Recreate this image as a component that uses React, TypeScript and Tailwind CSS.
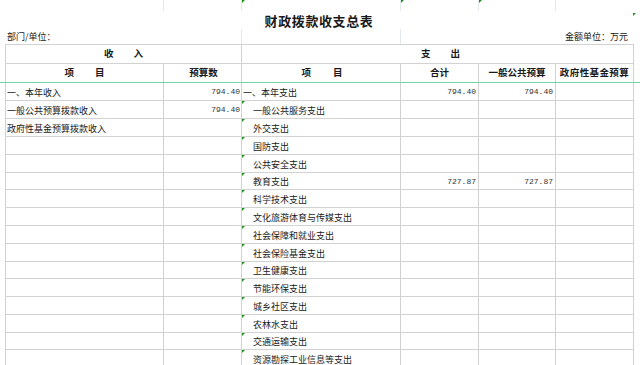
import React from "react";

type Row = {
  l?: string;
  lv?: string;
  r: string;
  ind?: boolean;
  a?: string;
  b?: string;
  short?: boolean;
};

const rows: Row[] = [
  { l: "一、本年收入", lv: "794.40", r: "一、本年支出", a: "794.40", b: "794.40" },
  { l: "一般公共预算拨款收入", lv: "794.40", r: "一般公共服务支出", ind: true },
  { l: "政府性基金预算拨款收入", r: "外交支出", ind: true },
  { r: "国防支出", ind: true },
  { r: "公共安全支出", ind: true },
  { r: "教育支出", ind: true, a: "727.87", b: "727.87", short: true },
  { r: "科学技术支出", ind: true },
  { r: "文化旅游体育与传媒支出", ind: true },
  { r: "社会保障和就业支出", ind: true },
  { r: "社会保险基金支出", ind: true },
  { r: "卫生健康支出", ind: true, short: true },
  { r: "节能环保支出", ind: true },
  { r: "城乡社区支出", ind: true },
  { r: "农林水支出", ind: true },
  { r: "交通运输支出", ind: true, short: true },
  { r: "资源勘探工业信息等支出", ind: true },
];

const cjk = { fontFamily: '"Noto Sans CJK SC", "Noto Sans", sans-serif' };
const mono = { fontFamily: '"Liberation Mono", "DejaVu Sans Mono", monospace' };

function Tick() {
  return (
    <span className="absolute left-0 top-0 w-0 h-0 border-t-[3px] border-r-[3px] border-t-[#1f8f1f] border-r-transparent" />
  );
}

const cols = "grid grid-cols-[158px_78px_159px_78px_77px_78px]";
const cell = "border-r border-b border-[#d2d2d2] flex items-center relative";

export default function App() {
  return (
    <div className="relative w-[640px] h-[365px] overflow-hidden bg-white text-[#1a1a1a]" style={cjk}>
      {/* top strip (previous row) */}
      <div className="flex h-[11px]">
        <div className="w-[6px]" />
        <div className={cols + " h-full"}>
          <div className="border-r border-[#e3e7ee]" />
          <div className="border-r border-[#e3e7ee]" />
          <div className="border-r border-[#e3e7ee] relative"><Tick /></div>
          <div className="border-r border-[#e3e7ee] relative"><Tick /></div>
          <div className="border-r border-[#e3e7ee] relative"><Tick /></div>
          <div className="relative" />
        </div>
      </div>
      {/* title row */}
      <div className="relative h-[18px] flex items-center justify-center pl-[0px] pr-[2px]">
        <span className="text-[13px] font-bold tracking-[0.6px] leading-none">财政拨款收支总表</span>
        <span className="absolute left-[633px] top-[2px] w-0 h-0 border-t-[3px] border-r-[3px] border-t-[#1f8f1f] border-r-transparent" />
      </div>
      {/* unit row */}
      <div className="flex h-[15px]">
        <div className="w-[6px]" />
        <div className="grid grid-cols-[236px_159px_233px] h-full text-[9px] leading-none">
          <div className="border-r border-[#e3e7ee] flex items-center pl-px">部门/单位：</div>
          <div className="border-r border-[#e3e7ee]" />
          <div className="flex items-center justify-end pr-[6px]">金额单位：万元</div>
        </div>
      </div>

      {/* table */}
      <div className="ml-[5px] w-[629px] border-l border-t border-[#d2d2d2] text-[9px] leading-none">
        {/* header row 1 */}
        <div className="grid grid-cols-[236px_392px] h-[19px] font-bold text-[9.5px]">
          <div className={cell + " justify-center gap-[20px]"}>
            <span>收</span>
            <span>入</span>
          </div>
          <div className={cell + " justify-center gap-[20px] pl-[6px]"}>
            <span>支</span>
            <span>出</span>
          </div>
        </div>
        {/* header row 2 */}
        <div className={cols + " h-[19px] font-bold text-[9.5px]"}>
          <div className={cell + " justify-center gap-[21px]"}>
            <span>项</span>
            <span>目</span>
          </div>
          <div className={cell + " justify-center pl-[2px]"}>预算数</div>
          <div className={cell + " justify-center gap-[22px] pl-[2px]"}>
            <span>项</span>
            <span>目</span>
          </div>
          <div className={cell + " justify-center"}>合计</div>
          <div className={cell + " justify-center"}>一般公共预算</div>
          <div className={cell + " justify-center tracking-[0.4px]"}>政府性基金预算</div>
        </div>
        {/* body */}
        {rows.map((r, i) => (
          <div key={i} className={cols + (r.short ? " h-[17px]" : " h-[18px]")}>
            <div className={cell + " pl-px pt-px"}>{r.l}</div>
            <div className={cell + " justify-end pr-px pt-px text-[8px] text-[#333]"} style={mono}>
              {r.lv}
            </div>
            <div className={cell + (r.ind ? " pl-[11px] pt-px" : " pl-px pt-px")}>
              {r.ind && <Tick />}
              {r.r}
            </div>
            <div className={cell + " justify-end pr-[2px] pt-px text-[8px] text-[#333]"} style={mono}>
              {r.a}
            </div>
            <div className={cell + " justify-end pr-[2px] pt-px text-[8px] text-[#333]"} style={mono}>
              {r.b}
            </div>
            <div className={cell} />
          </div>
        ))}
      </div>

      {/* freeze pane line */}
      <div className="absolute left-0 top-[82px] w-[640px] h-px bg-[#72d3a4]" />
    </div>
  );
}
